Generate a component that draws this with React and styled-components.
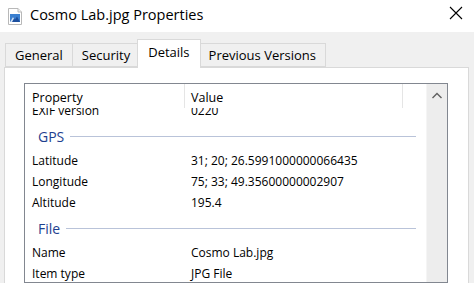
import React from 'react';
import styled, { createGlobalStyle } from 'styled-components';

const GlobalStyle = createGlobalStyle`
  html, body {
    margin: 0;
    padding: 0;
    background: #f0f0f0;
  }
  body {
    font-family: 'Open Sans', 'Liberation Sans', sans-serif;
    color: #000;
  }
`;

const tabs = ['General', 'Security', 'Details', 'Previous Versions'];

const sections = [
  {
    title: null,
    rows: [['EXIF version', '0220']],
  },
  {
    title: 'GPS',
    rows: [
      ['Latitude', '31; 20; 26.5991000000066435'],
      ['Longitude', '75; 33; 49.35600000002907'],
      ['Altitude', '195.4'],
    ],
  },
  {
    title: 'File',
    rows: [
      ['Name', 'Cosmo Lab.jpg'],
      ['Item type', 'JPG File'],
      ['Folder path', 'C:\\Users\\Pictures'],
      ['Date created', '12/3/2019 4:15 PM'],
    ],
  },
];

const App = () => {
  return (
    <>
      <GlobalStyle />
      <StyledWindow>
        <StyledTitleBar>
          <FileIcon />
          <StyledTitle>Cosmo Lab.jpg Properties</StyledTitle>
          <StyledClose title="Close">
            <svg width="14" height="14" viewBox="0 0 14 14">
              <path d="M1 1 L13 13 M13 1 L1 13" stroke="#000000" strokeWidth="1.1" fill="none" />
            </svg>
          </StyledClose>
        </StyledTitleBar>

        <StyledTabStrip>
          {tabs.map(tab => (
            <StyledTab key={tab} active={tab === 'Details' ? true : undefined}>
              {tab}
            </StyledTab>
          ))}
        </StyledTabStrip>

        <StyledPanel>
          <StyledListBox>
            <StyledListBody>
              <StyledHeader>
                <StyledHeadCell width={160}>Property</StyledHeadCell>
                <StyledHeadCell width={218}>Value</StyledHeadCell>
              </StyledHeader>
              <StyledViewport>
                <StyledScrolled>
                  {sections.map((section, i) => (
                    <React.Fragment key={i}>
                      {section.title && (
                        <StyledGroup>
                          <StyledGroupName>{section.title}</StyledGroupName>
                          <StyledGroupLine />
                        </StyledGroup>
                      )}
                      {section.rows.map(([name, value]) => (
                        <StyledRow key={name}>
                          <StyledName>{name}</StyledName>
                          <StyledValue>{value}</StyledValue>
                        </StyledRow>
                      ))}
                    </React.Fragment>
                  ))}
                </StyledScrolled>
              </StyledViewport>
            </StyledListBody>
            <StyledScrollBar>
              <svg width="20" height="22" viewBox="0 0 20 22">
                <path d="M5.5 14 L10 9.5 L14.5 14" stroke="#606060" strokeWidth="1.4" fill="none" />
              </svg>
            </StyledScrollBar>
          </StyledListBox>
        </StyledPanel>
      </StyledWindow>
    </>
  );
};

export default App;

const FileIcon = () => (
  <svg width="14" height="17" viewBox="0 0 14 17">
    <path d="M0.5 0.5 H10 L13.5 4 V16.5 H0.5 Z" fill="#fff" stroke="#b8b8b8" />
    <path d="M10 0.5 V4 H13.5" fill="#f2f2f2" stroke="#b8b8b8" />
    <rect x="2" y="6" width="10" height="8" fill="#3a7fd0" />
    <path d="M2 14 L5 9 L7 11.5 L9 8.5 L12 14 Z" fill="#1d4f9e" />
    <path d="M2 14 L5 9 L6 10.5 L4 14 Z" fill="#cfe2f7" />
  </svg>
);

const StyledWindow = styled.div`
  display: flex;
  flex-direction: column;
  width: 474px;
  height: 283px;
  overflow: hidden;
  background: #f0f0f0;
`;

const StyledTitleBar = styled.div`
  display: flex;
  align-items: center;
  gap: 8px;
  height: 32px;
  padding: 0 0 0 8px;
  background: #fff;
  box-sizing: border-box;
  flex-shrink: 0;
`;

const StyledTitle = styled.span`
  flex: 1;
  font-size: 14.5px;
  line-height: 20px;
  margin-top: -2px;
`;

const StyledClose = styled.div`
  display: flex;
  align-items: center;
  justify-content: center;
  flex-shrink: 0;
  width: 36px;
  height: 32px;
  padding-bottom: 6px;
  box-sizing: border-box;
  background: #fff;
`;

const StyledTabStrip = styled.div`
  display: flex;
  align-items: flex-end;
  height: 35px;
  padding-left: 5px;
  flex-shrink: 0;
`;

const StyledTab = styled.div`
  position: relative;
  display: flex;
  align-items: center;
  box-sizing: border-box;
  height: ${props => (props.active ? '29px' : '24px')};
  margin: ${props => (props.active ? '0 -2px -1px -2px' : '0 -1px 0 0')};
  padding: ${props => (props.active ? '0 10px 4px' : '0 9px 1px')};
  font-size: 13px;
  background: ${props => (props.active ? '#fff' : '#f0f0f0')};
  border: 1px solid #d9d9d9;
  border-bottom: ${props => (props.active ? 'none' : '1px solid #d9d9d9')};
  z-index: ${props => (props.active ? 2 : 1)};
`;

const StyledPanel = styled.div`
  flex: 1;
  display: flex;
  flex-direction: column;
  margin: 0 5px 0 4px;
  padding: 15px 20px 0 19px;
  background: #fff;
  border: 1px solid #d9d9d9;
  border-bottom: none;
  min-height: 0;
`;

const StyledListBox = styled.div`
  flex: 1;
  display: flex;
  min-height: 0;
  border: 1px solid #828790;
  background: #fff;
`;

const StyledListBody = styled.div`
  flex: 1;
  display: flex;
  flex-direction: column;
  min-width: 0;
`;

const StyledHeader = styled.div`
  display: flex;
  height: 24px;
  position: relative;
  z-index: 1;
  background: #fff;
  font-size: 12.5px;
`;

const StyledHeadCell = styled.div`
  box-sizing: border-box;
  width: ${props => props.width}px;
  padding: 4px 0 0 7px;
  line-height: 20px;
  border-right: 1px solid #e5e5e5;

  & + & {
    padding-left: 6px;
  }
`;

const StyledViewport = styled.div`
  flex: 1;
  overflow: hidden;
`;

const StyledScrolled = styled.div`
  margin-top: -8px;
  font-size: 12px;
`;

const StyledRow = styled.div`
  display: flex;
  height: 21px;
  line-height: 21px;
  white-space: nowrap;
`;

const StyledName = styled.span`
  width: 160px;
  padding-left: 7px;
  box-sizing: border-box;
`;

const StyledValue = styled.span`
  padding-left: 6px;
`;

const StyledGroup = styled.div`
  display: flex;
  align-items: center;
  gap: 6px;
  height: 21px;
  padding: 5px 10px 0 13px;
  margin-bottom: 3px;
`;

const StyledGroupName = styled.span`
  font-size: 14px;
  line-height: 21px;
  color: #1e3f8f;
`;

const StyledGroupLine = styled.span`
  flex: 1;
  height: 1px;
  background: #b9c3d9;
`;

const StyledScrollBar = styled.div`
  width: 20px;
  background: #ededed;
  border-left: 1px solid #f5f5f5;
`;
